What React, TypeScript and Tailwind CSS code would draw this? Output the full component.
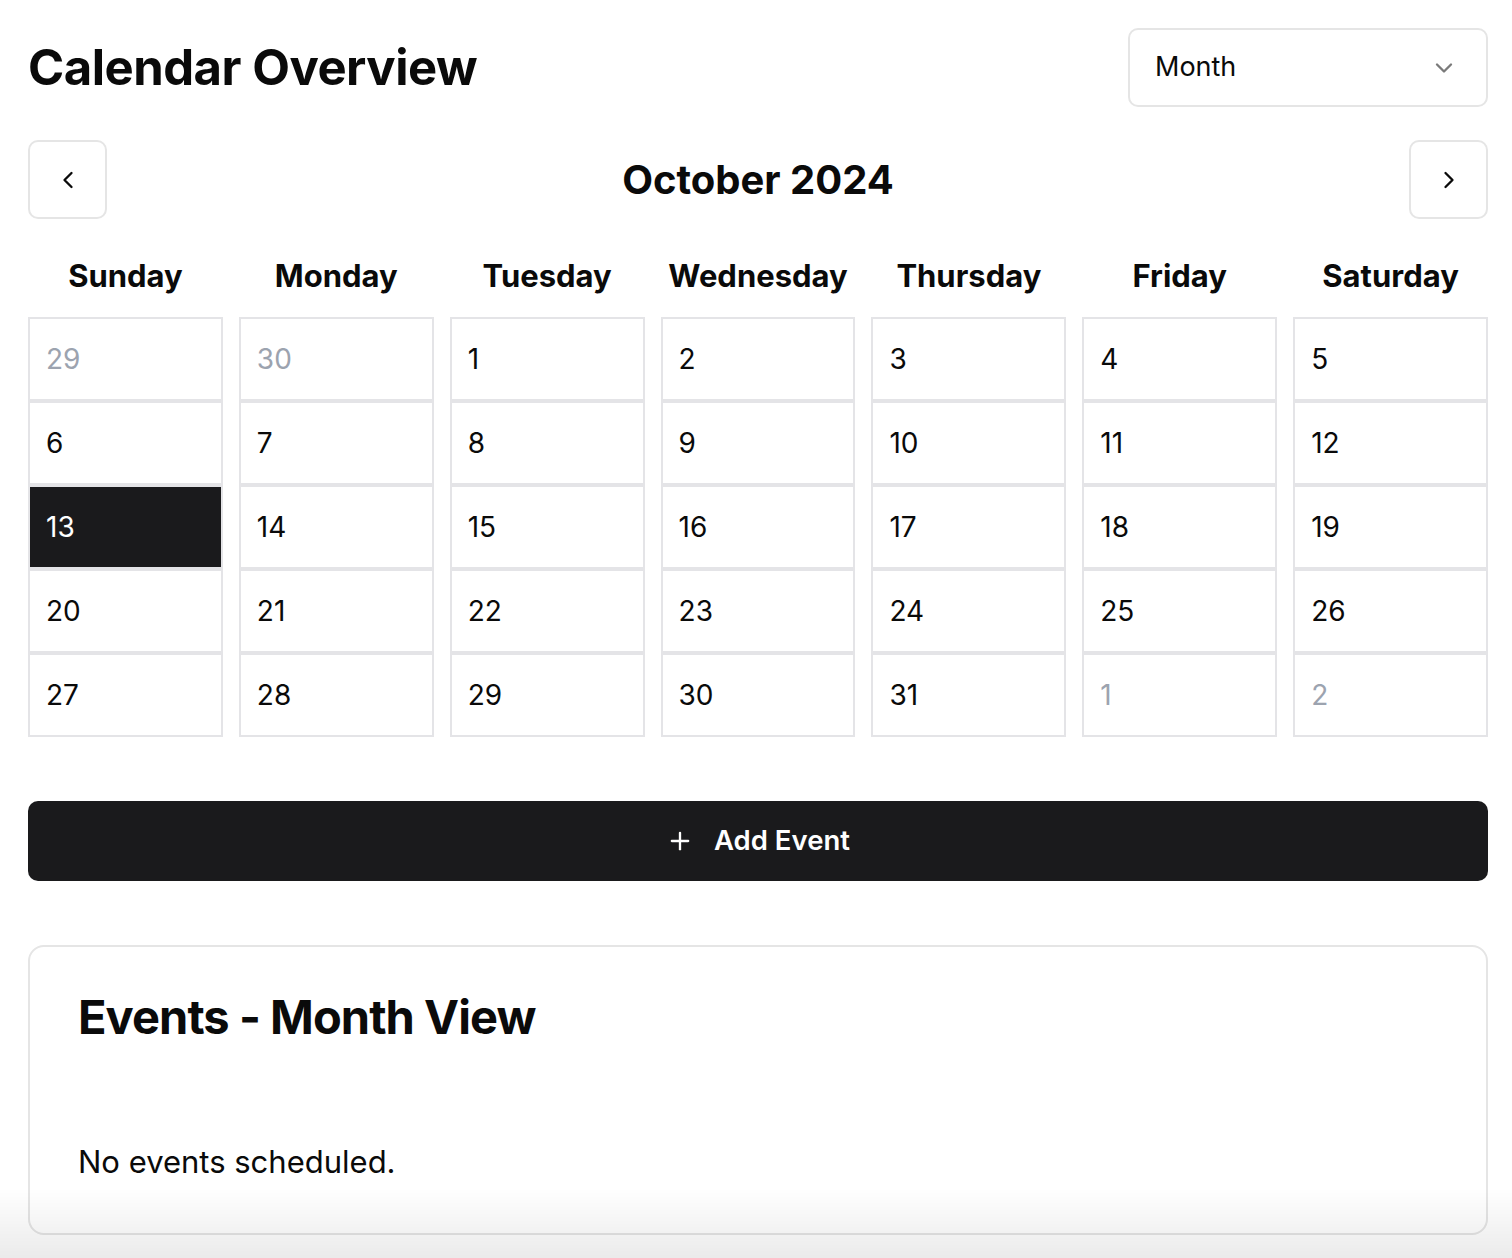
import React from "react";
import { ChevronDown, ChevronLeft, ChevronRight, Plus } from "lucide-react";

const days = ["Sunday", "Monday", "Tuesday", "Wednesday", "Thursday", "Friday", "Saturday"];

type Cell = { n: number; muted?: boolean; today?: boolean };

const cells: Cell[] = [
  { n: 29, muted: true },
  { n: 30, muted: true },
  ...Array.from({ length: 31 }, (_, i) => ({ n: i + 1, today: i + 1 === 13 })),
  { n: 1, muted: true },
  { n: 2, muted: true },
];

export default function App() {
  return (
    <div className="relative h-[1258px] overflow-hidden bg-white pb-7 pl-7 pr-6 pt-7 font-['Inter',sans-serif] text-[#0a0a0a]">
      <div className="flex items-center justify-between">
        <h1 className="text-[49px] font-bold leading-none tracking-[-0.01em]">Calendar Overview</h1>
        <div className="flex h-[79px] w-[360px] items-center justify-between rounded-[10px] border-2 border-[#e5e5e5] pl-[25px] pr-[28px]">
          <span className="text-[27px]">Month</span>
          <ChevronDown className="h-7 w-7 text-[#7a7a7a]" strokeWidth={2} />
        </div>
      </div>

      <div className="mt-[33px] flex items-center justify-between">
        <button className="flex h-[79px] w-[79px] items-center justify-center rounded-[10px] border-2 border-[#e5e5e5]">
          <ChevronLeft className="h-7 w-7" strokeWidth={2} />
        </button>
        <h2 className="text-[40px] font-bold leading-none">October 2024</h2>
        <button className="flex h-[79px] w-[79px] items-center justify-center rounded-[10px] border-2 border-[#e5e5e5]">
          <ChevronRight className="h-7 w-7" strokeWidth={2} />
        </button>
      </div>

      <div className="mt-5 grid h-[74px] grid-cols-7 items-center gap-x-4">
        {days.map((d) => (
          <div key={d} className="text-center text-[31px] font-bold">
            {d}
          </div>
        ))}
      </div>

      <div className="mt-1 grid grid-cols-7 gap-x-4">
        {cells.map((c, i) => (
          <div
            key={i}
            className={
              c.today
                ? "flex h-[84px] items-center border-2 border-[#e4e4e7] bg-[#1a1a1c] pl-4 text-[28px] text-white"
                : c.muted
                ? "flex h-[84px] items-center border-2 border-[#e4e4e7] pl-4 text-[28px] text-[#9ca3af]"
                : "flex h-[84px] items-center border-2 border-[#e4e4e7] pl-4 text-[28px]"
            }
          >
            {c.n}
          </div>
        ))}
      </div>

      <button className="mt-16 flex h-20 w-full items-center justify-center gap-[20px] rounded-[10px] bg-[#1a1a1c] text-[27.5px] font-semibold text-white">
        <Plus className="h-7 w-7" strokeWidth={2} />
        <span>Add Event</span>
      </button>

      <div className="mt-16 h-[290px] rounded-2xl border-2 border-[#e5e5e5] px-12 pt-[46px]">
        <h3 className="text-[47px] font-bold leading-none tracking-[-0.02em]">Events - Month View</h3>
        <p className="mt-[106px] text-[31px] leading-none">No events scheduled.</p>
      </div>

      <div className="pointer-events-none fixed bottom-0 left-0 right-0 h-[70px] bg-gradient-to-b from-transparent to-black/[0.08]" />
    </div>
  );
}
